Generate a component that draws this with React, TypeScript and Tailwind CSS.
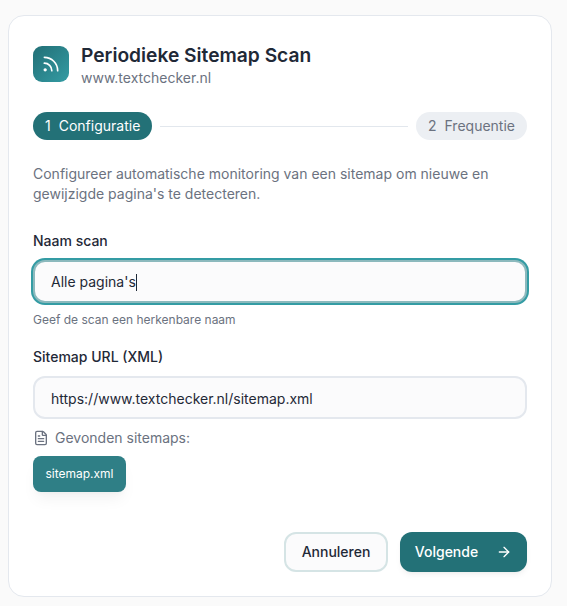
import { ArrowRight, FileText, Rss } from "lucide-react";

/* Periodieke scan wizard, step 1 */

export default function App() {
  return (
    <div className="h-[606px] w-[567px] overflow-hidden bg-[#fafafa] pl-2 pt-[15px] font-['Inter',sans-serif] text-[#1f2937]">
      <div className="flex h-[582px] w-[544px] flex-col rounded-2xl border border-[#e4e8ee] bg-white px-6 pt-[30px]">
        <div className="flex items-start gap-3">
          <span className="grid h-9 w-9 shrink-0 place-items-center rounded-[9px] bg-gradient-to-br from-[#226f76] to-[#349ca4] text-white">
            <Rss className="h-5 w-5" />
          </span>
          <div>
            <h1 className="text-[19.2px] leading-[18px] font-semibold">Periodieke Sitemap Scan</h1>
            <p className="mt-[5px] text-sm leading-[17px] text-[#6b7280]">www.textchecker.nl</p>
          </div>
        </div>

        <div className="mt-[26px] flex items-center gap-2">
          <span className="flex h-7 items-center gap-2 rounded-full bg-[#237177] px-3 text-sm text-white">
            <span>1</span>
            <span>Configuratie</span>
          </span>
          <span className="h-px flex-1 bg-[#e2e7ed]" />
          <span className="flex h-7 items-center gap-2 rounded-full bg-[#eceff3] px-3 text-sm text-[#6b7280]">
            <span>2</span>
            <span>Frequentie</span>
          </span>
        </div>

        <p className="mt-6 text-sm leading-[20px] text-[#6b7280]">
          Configureer automatische monitoring van een sitemap om nieuwe en gewijzigde pagina's te detecteren.
        </p>

        <label className="mt-7 block text-sm leading-[17px] font-medium">Naam scan</label>
        <div className="mt-[11px] flex h-[43px] items-center rounded-xl border-2 border-[#8cb9bd] bg-[#fbfbfc] px-4 pt-px text-sm ring-2 ring-[#349ca4]">
          <span>Alle pagina's</span>
          <span className="h-[17px] w-px bg-[#1f2937]" />
        </div>
        <p className="mt-[10px] text-xs leading-[14px] text-[#6b7280]">Geef de scan een herkenbare naam</p>

        <label className="mt-[21px] block text-sm leading-[17px] font-medium">Sitemap URL (XML)</label>
        <input
          readOnly
          value="https://www.textchecker.nl/sitemap.xml"
          className="mt-[11px] h-[43px] w-full rounded-xl border-2 border-[#e4e8ee] bg-[#fbfbfc] px-4 pt-px text-sm outline-none"
        />

        <div className="mt-[10px] flex items-center gap-[6px] text-sm leading-[17px] text-[#6b7280]">
          <FileText className="h-4 w-4" />
          <span>Gevonden sitemaps:</span>
        </div>
        <div className="mt-[10px]">
          <button className="h-9 w-[93px] rounded-lg bg-[#2f7f86] text-xs text-white shadow-lg shadow-black/5">
            sitemap.xml
          </button>
        </div>

        <div className="mt-10 flex justify-end gap-3">
          <button className="h-10 w-[104px] rounded-xl border-2 border-[#d5e4e5] bg-[#fbfbfc] text-sm font-medium">
            Annuleren
          </button>
          <button className="flex h-10 w-[127px] items-center justify-center gap-[18px] rounded-xl bg-[#237177] text-sm font-medium text-white shadow-md shadow-black/5">
            Volgende
            <ArrowRight className="h-4 w-4" />
          </button>
        </div>
      </div>
    </div>
  );
}
